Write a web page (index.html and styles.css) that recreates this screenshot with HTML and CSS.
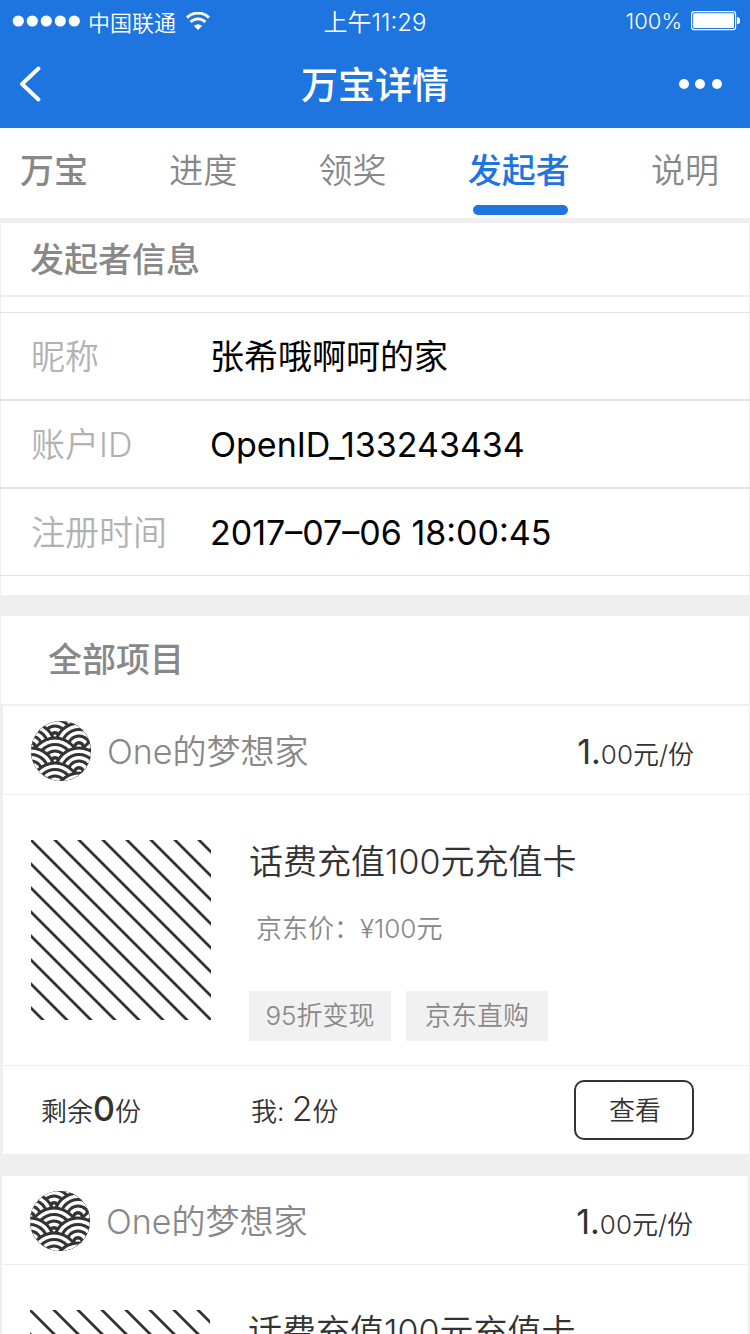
FILE: index.html
```html
<!DOCTYPE html>
<html lang="zh-CN">
<head>
<meta charset="utf-8">
<meta name="viewport" content="width=device-width, initial-scale=1">
<title>万宝详情</title>
<link rel="stylesheet" href="styles.css">
</head>
<body>
<svg class="defs" aria-hidden="true">
  <defs>
    <pattern id="stripes" width="24" height="24" patternUnits="userSpaceOnUse">
      <path d="M-12-12 36 36M-12 12 12 36M12-12 36 12" stroke="#333" stroke-width="2.8"/>
    </pattern>
    <g id="scallop">
      <circle r="25.5" fill="#333"/>
      <circle r="22.5" fill="#fff"/>
      <circle r="19" fill="#333"/>
      <circle r="16" fill="#fff"/>
      <circle r="12.5" fill="#333"/>
      <circle r="9.5" fill="#fff"/>
      <circle r="6" fill="#333"/>
      <circle r="2.6" fill="#fff"/>
    </g>
    <clipPath id="round"><circle cx="30" cy="30" r="30"/></clipPath>
    <symbol id="waves" viewBox="0 0 60 60">
      <g clip-path="url(#round)">
        <use href="#scallop" x="0" y="1"/><use href="#scallop" x="48" y="1"/>
        <use href="#scallop" x="24" y="16"/><use href="#scallop" x="72" y="16"/>
        <use href="#scallop" x="0" y="26"/><use href="#scallop" x="48" y="26"/>
        <use href="#scallop" x="24" y="41"/><use href="#scallop" x="72" y="41"/>
        <use href="#scallop" x="0" y="51"/><use href="#scallop" x="48" y="51"/>
        <use href="#scallop" x="24" y="66"/><use href="#scallop" x="72" y="66"/>
        <use href="#scallop" x="0" y="76"/><use href="#scallop" x="48" y="76"/>
      </g>
    </symbol>
  </defs>
</svg>
<div class="app">
  <header class="header">
    <div class="status">
      <div class="status-left">
        <svg class="signal" width="68" height="12" viewBox="0 0 68 12" fill="#fff" aria-hidden="true"><circle cx="6.3" cy="6" r="5.6"/><circle cx="20.3" cy="6" r="5.6"/><circle cx="34.3" cy="6" r="5.6"/><circle cx="48.3" cy="6" r="5.6"/><circle cx="62.3" cy="6" r="5.6"/></svg>
        <span class="carrier">中国联通</span>
        <svg class="wifi" width="24" height="18" viewBox="0 0 24 18" fill="none" stroke="#fff" aria-hidden="true"><path d="M1 5.6A15.6 15.6 0 0 1 23 5.6" stroke-width="3"/><path d="M4.6 10A10.2 10.2 0 0 1 19.4 10" stroke-width="2.8"/><path d="M12 18 8 14A5.4 5.4 0 0 1 16 14Z" fill="#fff" stroke="none"/></svg>
      </div>
      <span class="time">上午11:29</span>
      <div class="status-right">
        <span>100%</span>
        <svg width="49" height="20" viewBox="0 0 49 20" aria-hidden="true"><rect x=".6" y=".6" width="44" height="18" rx="2.4" fill="none" stroke="#fff" stroke-width="1.2"/><rect x="2.2" y="2.2" width="40.8" height="14.8" rx="1" fill="#fff"/><path d="M46 6a3.2 3.6 0 0 1 0 7.2Z" fill="#fff"/></svg>
      </div>
    </div>
    <div class="bar">
      <button class="bar-button" type="button" aria-label="返回">
        <svg width="22" height="36" viewBox="0 0 22 36" fill="none" stroke="#fff" stroke-width="3.8" stroke-linecap="round" stroke-linejoin="round"><path d="M19.5 2.5 3 18 19.5 33.5"/></svg>
      </button>
      <h1 class="title">万宝详情</h1>
      <button class="bar-button bar-more" type="button" aria-label="更多">
        <svg width="44" height="10" viewBox="0 0 44 10" fill="#fff"><circle cx="5" cy="5" r="5"/><circle cx="21" cy="5" r="5"/><circle cx="38" cy="5" r="5"/></svg>
      </button>
    </div>
  </header>
  <nav class="tabs">
    <a class="tab tab-strong" href="#lot">万宝</a>
    <a class="tab" href="#progress">进度</a>
    <a class="tab" href="#prize">领奖</a>
    <a class="tab tab-active" href="#owner" aria-current="page">发起者</a>
    <a class="tab" href="#about">说明</a>
  </nav>
  <main class="content">
    <section class="owner" id="owner">
      <h2 class="owner-title">发起者信息</h2>
      <dl class="fields">
        <div class="field"><dt>昵称</dt><dd>张希哦啊呵的家</dd></div>
        <div class="field"><dt>账户ID</dt><dd>OpenID_133243434</dd></div>
        <div class="field"><dt>注册时间</dt><dd>2017–07–06 18:00:45</dd></div>
      </dl>
    </section>
    <section class="projects">
      <h2 class="projects-title">全部项目</h2>
      <article class="card">
        <header class="card-head">
          <svg class="avatar" width="60" height="60" aria-hidden="true"><use href="#waves"/></svg>
          <span class="card-name">One的梦想家</span>
          <span class="price"><span class="big">1.</span>00元/份</span>
        </header>
        <div class="card-body">
          <svg class="photo" width="180" height="180" aria-hidden="true"><rect width="180" height="180" fill="url(#stripes)"/></svg>
          <div class="detail">
            <h3 class="goods">话费充值100元充值卡</h3>
            <p class="market">京东价：¥100元</p>
            <div class="tags"><span class="tag">95折变现</span><span class="tag">京东直购</span></div>
          </div>
        </div>
        <footer class="card-foot">
          <span class="left">剩余<b class="big">0</b>份</span>
          <span class="mine">我: <span class="big">2</span>份</span>
          <button class="view" type="button">查看</button>
        </footer>
      </article>
      <article class="card card-next">
        <header class="card-head">
          <svg class="avatar" width="60" height="60" aria-hidden="true"><use href="#waves"/></svg>
          <span class="card-name">One的梦想家</span>
          <span class="price"><span class="big">1.</span>00元/份</span>
        </header>
        <div class="card-body">
          <svg class="photo" width="180" height="180" aria-hidden="true"><rect width="180" height="180" fill="url(#stripes)"/></svg>
          <div class="detail">
            <h3 class="goods">话费充值100元充值卡</h3>
          </div>
        </div>
      </article>
    </section>
  </main>
</div>
</body>
</html>
```
FILE: styles.css
```css
* { box-sizing: border-box; }
body, h1, h2, h3, p, dl, dd { margin: 0; }
body {
  background: #efefef;
  color: #333;
  font-family: Inter, "Noto Sans CJK SC", sans-serif;
  font-size: 34px;
  font-weight: 350;
}
button { font: inherit; color: inherit; background: none; border: 0; padding: 0; }
svg { display: block; flex: none; }
.defs { position: absolute; width: 0; height: 0; }
.app { display: flex; flex-direction: column; height: 100vh; }

.header { flex: none; background: #1f75df; color: #fff; }
.status {
  display: grid;
  grid-template-columns: 1fr auto 1fr;
  align-items: center;
  height: 40px;
  padding: 0 12px;
  font-size: 22px;
  line-height: 38px;
}
.status-left, .status-right { display: flex; align-items: center; }
.carrier { margin: 4px 10px 0 8px; }
.time { padding-top: 4px; font-size: 24px; }
.status-right { justify-content: flex-end; gap: 9px; margin-right: -2px; }
.bar {
  display: grid;
  grid-template-columns: 1fr auto 1fr;
  align-items: center;
  height: 88px;
  padding: 0 19px;
}
.bar-button { justify-self: start; }
.bar-more { justify-self: end; margin-right: 8px; }
.title { padding-top: 4px; font-size: 37px; font-weight: 500; line-height: 84px; }

.tabs {
  flex: none;
  display: flex;
  justify-content: space-between;
  height: 95px;
  padding: 0 31px 0 20px;
  background: #fff;
  border-bottom: 5px solid #efefef;
}
.tab { position: relative; color: #888; line-height: 86px; text-decoration: none; }
.tab-strong { font-weight: 500; }
.tab-active { color: #1f75df; font-weight: 500; }
.tab-active::after {
  content: "";
  position: absolute;
  right: 2px;
  bottom: 3px;
  left: 5px;
  height: 10px;
  border-radius: 5px;
  background: #1f75df;
}

.content { flex: 1; min-height: 0; overflow-y: auto; scrollbar-width: none; }
.owner {
  padding-bottom: 19px;
  background: #fff;
  border: solid #efefef;
  border-width: 0 1px;
}
.owner-title {
  height: 74px;
  padding-left: 29px;
  border-bottom: 2px solid #efefef;
  color: #888;
  font-size: 34px;
  font-weight: 500;
  line-height: 74px;
}
.fields { margin: 15px -1px 0; border-top: 1px solid #e3e3e3; }
.field {
  display: grid;
  grid-template-columns: 179px 1fr;
  height: 88px;
  padding-left: 31px;
  border-bottom: 2px solid #e3e3e3;
  line-height: 88px;
}
.field:last-child { height: 87px; border-bottom-width: 1px; }
.field dt { color: #b2b2b2; }
.field dd { color: #000; font-weight: 400; }

.projects { margin-top: 21px; }
.projects-title {
  height: 90px;
  margin: 0 1px;
  padding-left: 47px;
  background: #fff;
  border-bottom: 2px solid #efefef;
  color: #888;
  font-size: 34px;
  font-weight: 500;
  line-height: 88px;
}
.card { margin: 0 1px 0 3px; background: #fff; font-size: 26px; }
.card-next { margin: 22px 2px 0; }
.card-head {
  display: flex;
  align-items: center;
  height: 89px;
  padding: 2px 55px 0 28px;
  border-bottom: 1px solid #efefef;
}
.card-name { flex: 1; margin-left: 16px; padding-top: 2px; color: #888; font-size: 34px; line-height: 40px; }
.big { font-size: 34px; }
.price .big { font-weight: 400; }
.card-body { display: flex; gap: 38px; height: 271px; padding: 45px 28px 0; border-bottom: 1px solid #efefef; }
.goods { font-size: 34px; font-weight: 350; line-height: 44px; }
.market { margin: 24px 0 0 7px; color: #888; line-height: 42px; }
.tags { display: flex; gap: 15px; margin-top: 41px; }
.tag { width: 142px; background: #f1f1f1; color: #888; line-height: 50px; text-align: center; }
.card-foot {
  display: grid;
  grid-template-columns: 210px 1fr auto;
  align-items: center;
  height: 88px;
  padding: 0 55px 0 38px;
}
.left, .mine { padding-bottom: 4px; }
.left b { font-weight: 500; }
.view { width: 120px; height: 60px; padding: 0 0 4px 2px; border: 2px solid #333; border-radius: 10px; }
```
